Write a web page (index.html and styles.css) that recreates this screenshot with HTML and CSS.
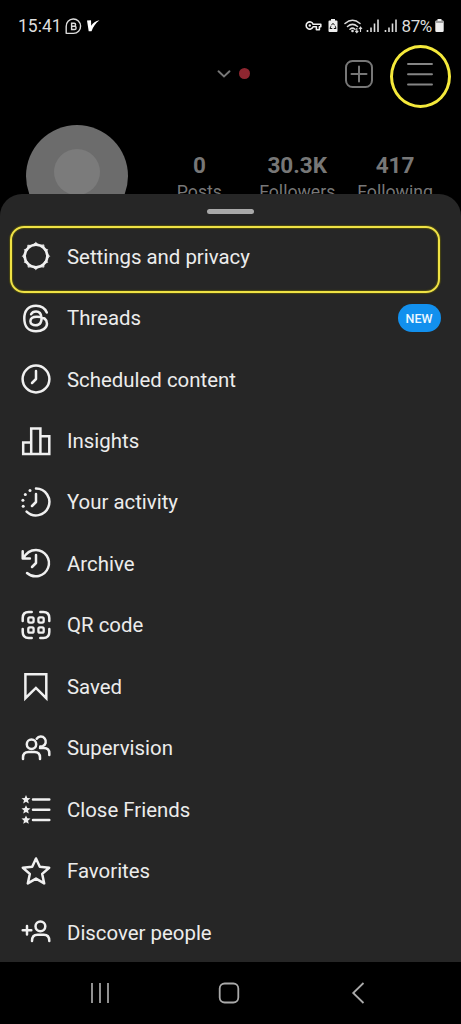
FILE: index.html
```html
<!DOCTYPE html>
<html lang="en">
<head>
<meta charset="utf-8">
<title>Profile menu</title>
<link rel="stylesheet" href="styles.css">
</head>
<body>
<div class="phone">
  <header class="top">
    <div class="status">
      <span class="time">15:41</span>
      <svg class="chat" width="17" height="17" viewBox="0 0 17 17"><path d="M1.200 15.800V8.500A7.200 7.200 0 1 1 8.500 15.400H1.200" fill="none" stroke="#ddd" stroke-width="1.400"/><path d="M6.600 5.300h2.500a1.500 1.500 0 0 1 0 3H6.600zM6.600 8.300h2.900a1.600 1.600 0 0 1 0 3.200H6.600z" fill="none" stroke="#ddd" stroke-width="1.400"/></svg>
      <svg class="vmark" width="13" height="12" viewBox="0 0 13 12"><path d="M0 .5 4 .3 4.200 5.800C6 3.100 8.500 1 12.500.3 8.500 3 6.200 7 4.500 11.200H1.700z" fill="#fff"/></svg>
      <span class="spacer"></span>
      <svg class="key" width="17" height="12" viewBox="0 0 17 12"><path d="M8.100 4.200h7.700v2.600h-1.400v3h-3V6.800H8.100a3.600 3.600 0 1 1 0-2.600z" fill="none" stroke="#eee" stroke-width="1.600" stroke-linejoin="round"/><circle cx="4.800" cy="5.500" r="1.200" fill="#eee"/></svg>
      <svg class="saver" width="10" height="14" viewBox="0 0 10 14"><path d="M3 0h4v1.500h1.500q1 0 1 1V12q0 1-1 1h-7q-1 0-1-1V2.500q0-1 1-1H3z" fill="#eee"/><path d="m3.300 6.300 1.700-2 1.700 2M7.300 7.200l.7 2.300H5.800M4.300 9.500H2l.9-2.300" fill="none" stroke="#111" stroke-width="1"/></svg>
      <svg class="wifi" width="19" height="15" viewBox="0 0 19 15"><g fill="none" stroke="#ddd" stroke-width="1.500" stroke-linecap="round"><path d="M1 4.500Q8.500-2 16 4.500M3.500 7.500q5-4.200 10 0M6 10.200q2.500-2.200 5 0"/></g><circle cx="8.500" cy="12" r="1.300" fill="#ddd"/><path d="M12.800 9v4.500m-1.500-1.600 1.500 1.800 1.500-1.800M16.500 13V8.500M15 10l1.500-1.800L18 10" fill="none" stroke="#ddd" stroke-width="1.100"/></svg>
      <svg class="signal" width="14" height="14" viewBox="0 0 14 14"><path d="M1.500 11v2M5 8.500V13M8.500 4.500V13M12 .5V13" stroke="#ddd" stroke-width="1.600"/></svg>
      <svg class="signal second" width="14" height="14" viewBox="0 0 14 14"><path d="M1.500 11v2M5 8.500V13M8.500 4.500V13M12 .5V13" stroke="#ddd" stroke-width="1.600"/></svg>
      <span class="percent">87%</span>
      <svg class="battery" width="9" height="14" viewBox="0 0 9 14"><path d="M2.500 0h4v1.500h1q1.200 0 1.200 1.200v9q0 1.300-1.200 1.300h-6Q.3 13 .3 11.700v-9q0-1.200 1.200-1.200h1z" fill="#eee"/><path d="M1 3h7" stroke="#888" stroke-width="1.500"/></svg>
    </div>
    <div class="appbar">
      <svg class="chevron" width="14" height="8" viewBox="0 0 14 8"><path d="m1.500 1.300 5.500 5.200 5.500-5.200" fill="none" stroke="#777" stroke-width="1.900" stroke-linecap="round"/></svg>
      <span class="dot"></span>
      <svg class="plus" width="30" height="30" viewBox="0 0 30 30"><g fill="none" stroke="#777" stroke-width="2" stroke-linecap="round"><rect x="2" y="2" width="26" height="26" rx="6.500"/><path d="M15 7.500v15M7.500 15h15"/></g></svg>
      <div class="hamburger">
        <svg width="26" height="24" viewBox="0 0 26 24"><path d="M1 2h24M1 12.300h24M1 22.500h24" stroke="#858585" stroke-width="1.900" stroke-linecap="round"/></svg>
        <span class="ring"></span>
      </div>
    </div>
    <div class="profile">
      <div class="avatar"><span class="avatar-core"></span></div>
      <div class="stats">
        <div class="stat"><b>0</b><span>Posts</span></div>
        <div class="stat"><b>30.3K</b><span>Followers</span></div>
        <div class="stat"><b>417</b><span>Following</span></div>
      </div>
    </div>
  </header>

  <main class="sheet">
    <div class="handle"></div>
    <ul class="menu">
      <li class="item selected">
        <svg class="icon" viewBox="0 0 30 30"><circle cx="15" cy="14" r="11.300"/><path class="solid gear" d="m15 .6 2.600 2.400h-5.200zM15 27.400l2.600-2.400h-5.200zM1.600 14l2.400-2.600v5.200zM28.400 14l-2.400-2.600v5.200zM7.100 3.200l3.500.3-3.700 3.700zM22.900 3.200l.2 4-3.700-3.700zM7.100 24.800l-.2-4 3.700 3.700zM22.900 24.800l.2-4-3.700 3.700zM3.700 7.500l3.500-.7-2.200 3.400zM26.300 7.500l-3.500-.7 2.200 3.400zM3.700 20.500l3.500.7-2.200-3.400zM26.300 20.500l-3.500.7 2.200-3.400z"/></svg>
        <span class="label">Settings and privacy</span>
      </li>
      <li class="item">
        <svg class="icon" viewBox="0 0 30 30"><path d="M25.800 8.500C23.800 3.500 19.500 1.700 15 1.700 7 1.700 3.300 7 3.300 14.500S7 27.300 15 27.300c6.200 0 11-3.300 11-7.600 0-5.200-5-7-10-7-4 0-6.600 1.700-6.600 4.500 0 2.600 2.400 4 5.200 4 4.700 0 6.200-3.500 5.900-7.500-.3-4.400-2.500-6.200-5.500-6.200-2.400 0-4 1-4.900 2.800"/></svg>
        <span class="label">Threads</span>
        <span class="badge">NEW</span>
      </li>
      <li class="item">
        <svg class="icon" viewBox="0 0 30 30"><circle cx="15" cy="14" r="13.400"/><path d="M15 6v8l-4 4"/></svg>
        <span class="label">Scheduled content</span>
      </li>
      <li class="item">
        <svg class="icon miter" viewBox="0 0 30 30"><path d="M2.200 27V15.500h8V27zM10.200 27V1.500h9.200V27zM19.400 9.200h8.900V27h-8.900z"/></svg>
        <span class="label">Insights</span>
      </li>
      <li class="item">
        <svg class="icon" viewBox="0 0 30 30"><path d="M15 .6a13.400 13.400 0 1 1-9.400 23M15 6v8l-4 4"/><g class="solid"><circle cx="9" cy="2.500" r="1.500"/><circle cx="4.300" cy="6.500" r="1.500"/><circle cx="1.900" cy="12.200" r="1.500"/><circle cx="2.200" cy="18.300" r="1.500"/></g></svg>
        <span class="label">Your activity</span>
      </li>
      <li class="item">
        <svg class="icon" viewBox="0 0 30 30"><path d="M2.600 9.200C5 4 9.500.9 15 .9A13.200 13.200 0 1 1 6 24M1.700 2.200v7.300h7.200M15 6v8l-4 4"/></svg>
        <span class="label">Archive</span>
      </li>
      <li class="item">
        <svg class="icon" viewBox="0 0 30 30"><path d="M1.700 10V7q0-6 6-6h3M19.300 1h3q6 0 6 6v3M28.300 18v3q0 6-6 6h-3M10.700 27h-3q-6 0-6-6v-3"/><g class="cells"><rect x="7.300" y="6.300" width="5.300" height="5.300" rx="1.500"/><rect x="17.400" y="6.300" width="5.300" height="5.300" rx="1.500"/><rect x="7.300" y="16.400" width="5.300" height="5.300" rx="1.500"/><rect x="17.400" y="16.400" width="5.300" height="5.300" rx="1.500"/></g></svg>
        <span class="label">QR code</span>
      </li>
      <li class="item">
        <svg class="icon miter" viewBox="0 0 30 30"><path d="M4.400 2.300h20.900v23.900L14.900 15.900 4.400 26.200z"/></svg>
        <span class="label">Saved</span>
      </li>
      <li class="item">
        <svg class="icon" viewBox="0 0 30 30"><circle cx="10.500" cy="10.300" r="4.700"/><path d="M2 25v-1.500q0-5.500 5.500-5.500h6q5.500 0 5.500 5.500V25M15.700 4.700a5 5 0 1 1 6 7.500l-2.500.4M19 14h4q5.300.2 5.300 5.300V21"/></svg>
        <span class="label">Supervision</span>
      </li>
      <li class="item">
        <svg class="icon" viewBox="0 0 30 30"><path d="M12 4.400h16.300M12 14.700h16.300M12 24.900h16.300"/><g class="solid stars"><path id="mini-star" d="m5 0 1.300 2.900 3.200.3L7 5.300l.8 3.100L5 6.800 2.200 8.400 3 5.300.5 3.200l3.200-.3z"/><use href="#mini-star" y="10.200"/><use href="#mini-star" y="20.400"/></g></svg>
        <span class="label">Close Friends</span>
      </li>
      <li class="item">
        <svg class="icon" viewBox="0 0 30 30"><path d="m15 1.500 3.800 8.300 9.400.9-7 6.200 2 9.500-8.200-4.800-8.200 4.800 2-9.500-7-6.200 9.400-.9z"/></svg>
        <span class="label">Favorites</span>
      </li>
      <li class="item">
        <svg class="icon" viewBox="0 0 30 30"><circle cx="19.400" cy="8.300" r="4.900"/><path d="M11 23q0-6.200 5.500-6.200h6.300q5.500 0 5.500 6.200M6 8v8.600M1.700 12.300h8.600"/></svg>
        <span class="label">Discover people</span>
      </li>
    </ul>
  </main>

  <nav class="nav">
    <svg width="20" height="22" viewBox="0 0 20 22"><path d="M2 1v20M10 1v20M18 1v20" stroke="#aaa" stroke-width="1.700"/></svg>
    <svg class="home" width="22" height="22" viewBox="0 0 22 22"><rect x="1.700" y="1.500" width="18.600" height="19" rx="5" fill="none" stroke="#aaa" stroke-width="1.800"/></svg>
    <svg width="14" height="22" viewBox="0 0 14 22"><path d="M12.500 1 2.200 11l10.300 10" fill="none" stroke="#aaa" stroke-width="1.800"/></svg>
  </nav>
</div>
</body>
</html>
```

FILE: styles.css
```css
*, *::after { box-sizing: border-box; }

body {
  margin: 0;
  background: #000;
  font-family: Roboto, "Liberation Sans", sans-serif;
}

svg { display: block; flex: none; }

.phone {
  width: 461px;
  height: 1024px;
  display: flex;
  flex-direction: column;
  background: #000;
  overflow: hidden;
}

.top {
  height: 193.5px;
  flex: none;
  overflow: hidden;
}

.status {
  height: 52px;
  padding: 0 17.5px 0 18px;
  display: flex;
  align-items: center;
  color: #ddd;
  font-size: 17.5px;
}

.time { width: 46.500px; }
.vmark { margin-left: 5px; }
.spacer { flex: 1; }
.saver { margin-left: 6px; }
.wifi { margin-left: 6px; }
.signal { margin-left: 3px; }
.signal.second { margin-left: 4px; }
.percent {
  width: 33px;
  margin-left: 4px;
  font-size: 17px;
  letter-spacing: -0.4px;
}

.appbar {
  height: 43px;
  padding: 0 28px 0 217px;
  display: flex;
  align-items: center;
}

.dot {
  width: 11px;
  height: 11px;
  margin-left: 8px;
  border-radius: 50%;
  background: #8e2630;
}

.plus { margin-left: auto; }
.hamburger { position: relative; margin-left: 33px; }

.ring {
  position: absolute;
  left: -17px;
  top: -17px;
  width: 61px;
  height: 63px;
  border: 3.5px solid #f5e93b;
  border-radius: 50%;
}

.profile {
  padding: 30px 17px 0 26px;
  display: flex;
}

.avatar {
  width: 102px;
  height: 102px;
  flex: none;
  padding-top: 24px;
  border-radius: 50%;
  background: #6c6c6c;
}

.avatar-core {
  display: block;
  width: 46px;
  height: 46px;
  margin: 0 auto;
  border-radius: 50%;
  background: #7b7b7b;
}

.stats {
  flex: 1;
  margin: 27px 0 0 22.5px;
  display: grid;
  grid-template-columns: repeat(3, 1fr);
}

.stat {
  display: flex;
  flex-direction: column;
  align-items: center;
  color: #777;
}

.stat b {
  font-size: 22.5px;
  line-height: 26px;
}

.stat span {
  font-size: 17.7px;
  line-height: 28px;
}

.sheet {
  height: 768.5px;
  flex: none;
  padding-top: 15px;
  border-radius: 22px 22px 0 0;
  background: #262626;
}

.handle {
  width: 47px;
  height: 5px;
  margin: 0 auto;
  border-radius: 3px;
  background: #a9a9a9;
}

.menu {
  list-style: none;
  margin: 0;
  padding: 13px 0 0;
}

.item {
  position: relative;
  height: 61.45px;
  padding: 0 20.5px 0 21px;
  display: flex;
  align-items: center;
  gap: 16px;
  color: #ececec;
  font-size: 20.4px;
}

.label { padding-bottom: 1px; }

.item.selected::after {
  content: "";
  position: absolute;
  left: 10px;
  top: -0.5px;
  width: 430px;
  height: 67px;
  border: 2px solid #efe244;
  border-radius: 14px;
  box-shadow: 0 0 1px 1px #4b4812, inset 0 0 1px 1px #4b4812;
}

.icon {
  width: 30px;
  height: 30px;
  overflow: visible;
  fill: none;
  stroke: #f0f0f0;
  stroke-width: 2.5;
  stroke-linecap: round;
  stroke-linejoin: round;
}

.miter { stroke-linejoin: miter; }
.solid { fill: #f0f0f0; stroke: none; }
.gear { stroke: #f0f0f0; stroke-width: 0.8; }
.cells { stroke-width: 2.3; }

.badge {
  width: 43px;
  height: 28px;
  margin: 0 0 2px auto;
  border-radius: 14px;
  background: #1290ee;
  color: #eef8ff;
  font-size: 12.5px;
  font-weight: 500;
  line-height: 29px;
  text-align: center;
}

.nav {
  flex: 1;
  padding: 0 96px 1px 90px;
  display: flex;
  align-items: center;
  justify-content: space-between;
}

.home { margin-right: 4px; }
```
